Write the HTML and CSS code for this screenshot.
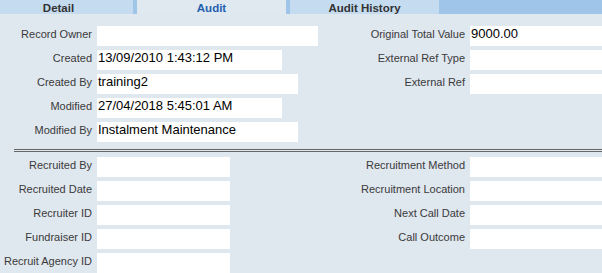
FILE: index.html
```html
<!DOCTYPE html>
<html lang="en">
<head>
<meta charset="UTF-8" />
<meta name="viewport" content="width=device-width, initial-scale=1" />
<title>Audit</title>
<link rel="stylesheet" href="styles.css">
</head>
<body>
<div class="tabs">
    <div class="tab first">Detail</div>
    <div class="tab active">Audit</div>
    <div class="tab">Audit History</div>
</div>

<div class="panel">
    <div class="section">
        <div class="fields left">
            <div class="label">Record Owner</div>
            <div class="value w-221"></div>
            <div class="label">Created</div>
            <div class="value w-185">13/09/2010 1:43:12 PM</div>
            <div class="label">Created By</div>
            <div class="value w-201">training2</div>
            <div class="label">Modified</div>
            <div class="value w-185">27/04/2018 5:45:01 AM</div>
            <div class="label">Modified By</div>
            <div class="value w-201">Instalment Maintenance</div>
        </div>
        <div class="fields right">
            <div class="label">Original Total Value</div>
            <div class="value">9000.00</div>
            <div class="label">External Ref Type</div>
            <div class="value"></div>
            <div class="label">External Ref</div>
            <div class="value"></div>
        </div>
    </div>

    <div class="divider"></div>

    <div class="section">
        <div class="fields left">
            <div class="label">Recruited By</div>
            <div class="value w-133"></div>
            <div class="label">Recruited Date</div>
            <div class="value w-133"></div>
            <div class="label">Recruiter ID</div>
            <div class="value w-133"></div>
            <div class="label">Fundraiser ID</div>
            <div class="value w-133"></div>
            <div class="label">Recruit Agency ID</div>
            <div class="value w-133"></div>
        </div>
        <div class="fields right">
            <div class="label">Recruitment Method</div>
            <div class="value"></div>
            <div class="label">Recruitment Location</div>
            <div class="value"></div>
            <div class="label">Next Call Date</div>
            <div class="value"></div>
            <div class="label">Call Outcome</div>
            <div class="value"></div>
        </div>
    </div>
</div>
</body>
</html>
```

FILE: styles.css
```css
* {
    box-sizing: border-box;
}
html, body {
    margin: 0;
    height: 100%;
    overflow: hidden;
}
body {
    background: #dfe7ef;
    font-family: "Liberation Sans", Arial, sans-serif;
    color: #333;
}
.tabs {
    display: flex;
    gap: 4px;
    height: 14px;
    background: #9fc6e8;
}
.tab {
    flex: 0 0 149px;
    height: 14px;
    line-height: 16px;
    text-align: center;
    font-size: 11.5px;
    font-weight: bold;
    color: #333;
    background: #c5dbf0;
    overflow: hidden;
}
.tab.first {
    flex-basis: 133px;
    padding-right: 16px;
}
.tab.active {
    background: #e0e8f0;
    color: #1f5fae;
}
.panel {
    padding-top: 12px;
}
.section {
    display: flex;
}
.fields {
    display: grid;
    column-gap: 5px;
    row-gap: 4px;
    align-content: start;
}
.fields.left {
    flex: 0 0 320px;
    grid-template-columns: 92px auto;
}
.fields.right {
    flex: 1;
    grid-template-columns: 145px 1fr;
}
.label {
    font-size: 11px;
    line-height: 17px;
    text-align: right;
    white-space: nowrap;
    color: #3a3a3a;
}
.value {
    height: 20px;
    background: #fff;
    font-size: 13px;
    line-height: 16px;
    padding-left: 1px;
    color: #000;
    white-space: nowrap;
}
.w-221 { width: 221px; }
.w-201 { width: 201px; }
.w-185 { width: 185px; }
.w-133 { width: 133px; }
.divider {
    height: 3px;
    margin: 7px 0 5px 14px;
    border-top: 1px solid #666;
    border-bottom: 1px solid #666;
}
```
